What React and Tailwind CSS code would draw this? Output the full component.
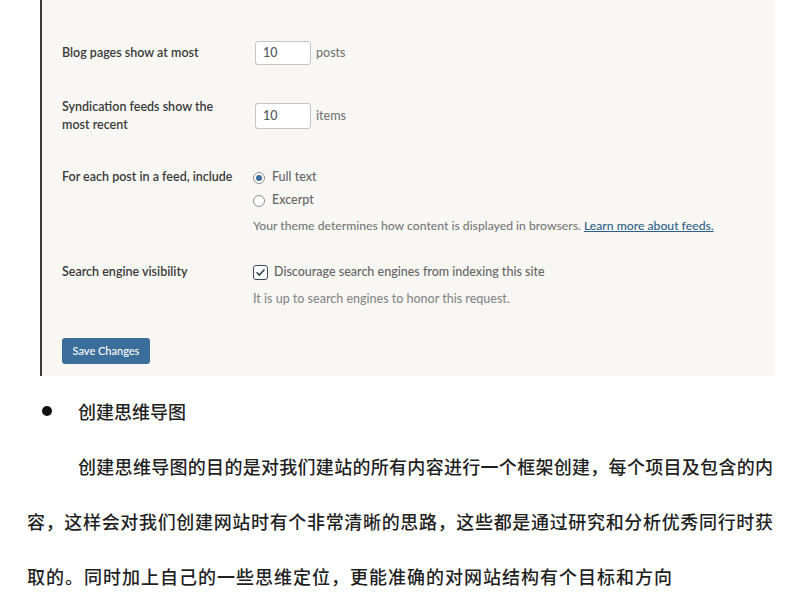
import React from "react";

const Radio = ({ checked }) => (
  <span className="flex h-[12px] w-[12px] items-center justify-center rounded-full border border-[#8c8f94] bg-white">
    {checked && <span className="h-[6px] w-[6px] rounded-full bg-[#3b6e9b]" />}
  </span>
);

const ReadingSettings = () => {
  return (
    <div className="ml-[40px] w-[735px] border-l-2 border-[#3a3a3a] bg-[#f8f7f4] pl-[20px] pt-[41px] pb-[12px] font-['Lato','Noto_Sans',sans-serif] text-[12.5px] text-[#3c434a]">
      {/* Blog pages */}
      <div className="flex items-center">
        <div className="w-[193px] font-semibold text-[#3a3a3a]">Blog pages show at most</div>
        <div className="flex h-[24px] w-[56px] items-center rounded-[3px] border border-[#c3c4c7] bg-white pl-[7px] text-[#50575e]">
          10
        </div>
        <span className="ml-[5px] text-[#777]">posts</span>
      </div>

      {/* Syndication feeds */}
      <div className="mt-[33px] flex items-center">
        <div className="w-[193px] font-semibold leading-[18px] text-[#3a3a3a]">
          Syndication feeds show the
          <br />
          most recent
        </div>
        <div className="flex h-[26px] w-[56px] items-center rounded-[3px] border border-[#c3c4c7] bg-white pl-[7px] text-[#50575e]">
          10
        </div>
        <span className="ml-[5px] text-[#777]">items</span>
      </div>

      {/* Feed content */}
      <div className="mt-[32px] flex items-start">
        <div className="w-[193px] font-semibold leading-[22px] text-[#3a3a3a]">
          For each post in a feed, include
        </div>
        <div className="-ml-[2px]">
          <div className="flex h-[23px] items-center gap-[7px] text-[#666]">
            <Radio checked />
            Full text
          </div>
          <div className="flex h-[23px] items-center gap-[7px] text-[#666]">
            <Radio />
            Excerpt
          </div>
          <div className="mt-[3px] text-[12.2px] leading-[22px] text-[#777]">
            Your theme determines how content is displayed in browsers.{" "}
            <span className="text-[#2e5f8a] underline">Learn more about feeds.</span>
          </div>
        </div>
      </div>

      {/* Search engine visibility */}
      <div className="mt-[24px] flex items-start">
        <div className="w-[193px] font-semibold leading-[22px] text-[#3a3a3a]">
          Search engine visibility
        </div>
        <div className="-ml-[2px]">
          <div className="flex h-[22px] items-center gap-[6px] text-[#666]">
            <span className="flex h-[15px] w-[15px] items-center justify-center rounded-[3px] border-[1.5px] border-[#3c4a55] bg-white">
              <svg viewBox="0 0 12 12" className="h-[11px] w-[11px]">
                <path d="M2.2 6.3 L4.8 8.8 L9.8 3.2" fill="none" stroke="#2f4656" strokeWidth="1.8" strokeLinecap="round" strokeLinejoin="round" />
              </svg>
            </span>
            Discourage search engines from indexing this site
          </div>
          <div className="mt-[5px] leading-[22px] text-[#888]">
            It is up to search engines to honor this request.
          </div>
        </div>
      </div>

      <button className="mt-[28px] flex h-[26px] w-[88px] items-center justify-center rounded-[3px] bg-[#3b6e9b] text-[11px] text-white">
        Save Changes
      </button>
    </div>
  );
};

export default function App() {
  return (
    <div className="h-[600px] w-[800px] overflow-hidden bg-white font-['Noto_Sans_CJK_SC',sans-serif] text-[18px] font-medium text-[#1f1f1f]">
      <ReadingSettings />

      {/* Heading */}
      <div className="mt-[20px] flex h-[30px] items-center pl-[42px]">
        <span className="h-[10px] w-[10px] rounded-full bg-[#111]" />
        <span className="ml-[26px]">创建思维导图</span>
      </div>

      {/* Paragraph */}
      <div className="mt-[13px] w-[773px] pl-[27px] leading-[55px]">
        <div className="pl-[51px] [text-align-last:justify] text-justify">
          创建思维导图的目的是对我们建站的所有内容进行一个框架创建，每个项目及包含的内
        </div>
        <div className="[text-align-last:justify] text-justify">
          容，这样会对我们创建网站时有个非常清晰的思路，这些都是通过研究和分析优秀同行时获
        </div>
        <div className="tracking-[1px]">
          取的。同时加上自己的一些思维定位，更能准确的对网站结构有个目标和方向
        </div>
      </div>
    </div>
  );
}
